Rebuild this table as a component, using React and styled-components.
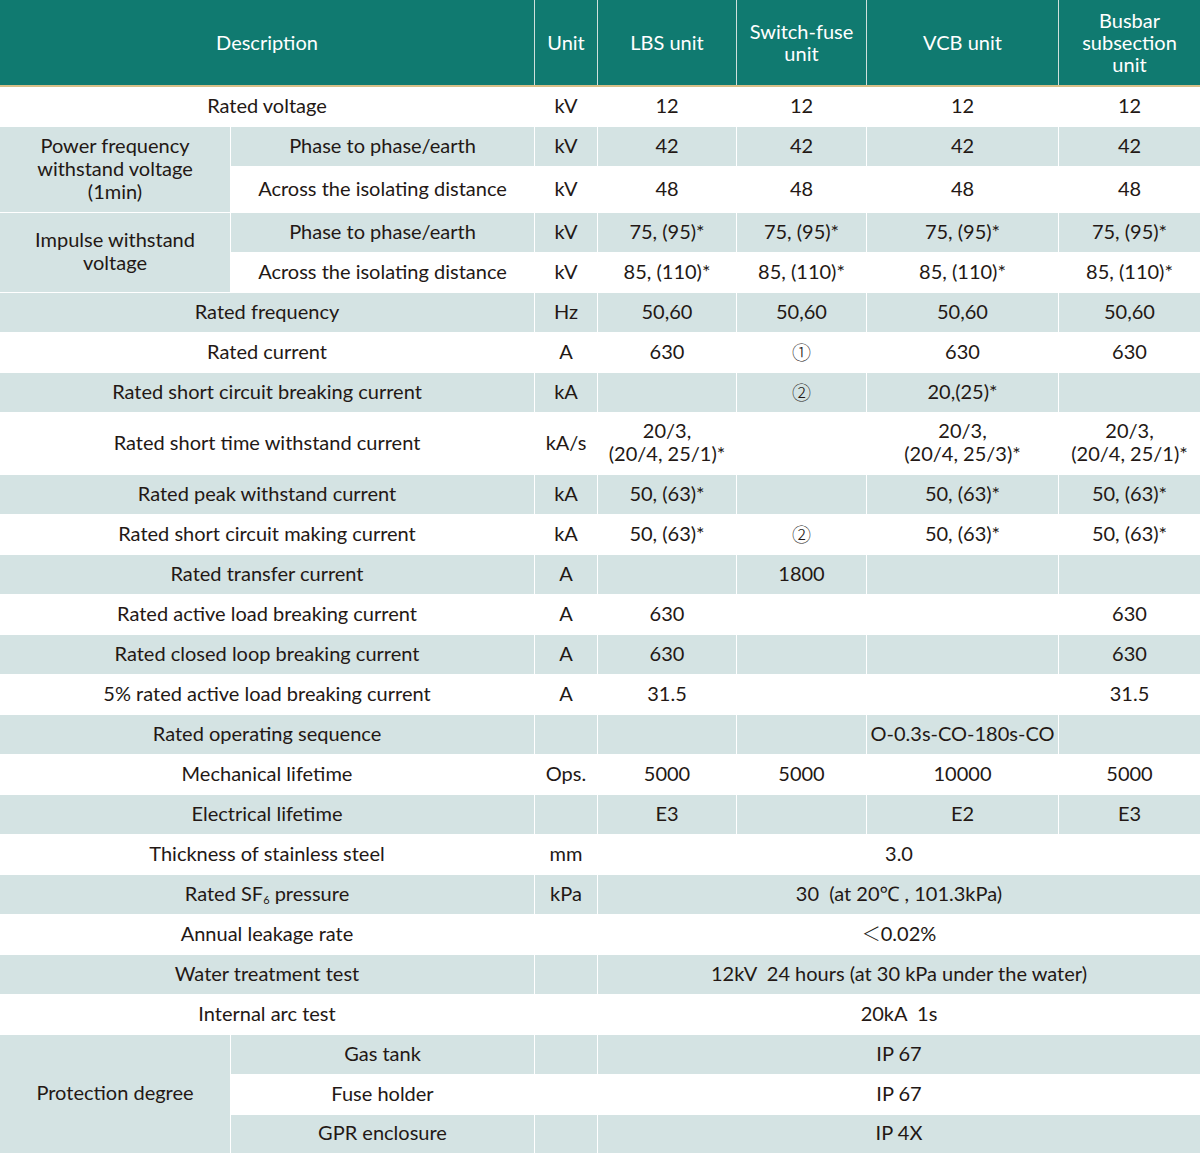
import React from "react";
import styled, { createGlobalStyle } from "styled-components";

const GlobalStyle = createGlobalStyle`
  body {
    margin: 0;
    background: #fff;
    font-family: Lato, "Noto Sans", "Noto Sans CJK JP", sans-serif;
  }
`;

const COLS = "230px 303px 62px 138px 129px 191px 141px";
const SHADE = "#d4e3e3";

const Table = styled.div`
  width: 1200px;
  color: #231815;
`;

const Head = styled.div`
  display: grid;
  grid-template-columns: ${COLS};
  grid-template-rows: 85px;
  column-gap: 1px;
  background: #cfe0dc;
  border-bottom: 2px solid #d8bf88;
`;

const HeadCell = styled.div`
  grid-column: span ${({ $span }) => $span || 1};
  background: #107a70;
  color: #fff;
  display: flex;
  align-items: center;
  justify-content: center;
  text-align: center;
  font-size: 20px;
  line-height: 22px;
  padding-bottom: 2px;
  white-space: pre-line;
`;

const Body = styled.div`
  display: grid;
  grid-template-columns: ${COLS};
  grid-template-rows: ${({ $rows }) => $rows};
  gap: 1px;
  background: #fff;
`;

const Cell = styled.div`
  grid-column: span ${({ $span }) => $span || 1};
  grid-row: span ${({ $rows }) => $rows || 1};
  background: ${({ $shade }) => ($shade ? SHADE : "#fff")};
  display: flex;
  align-items: center;
  justify-content: center;
  text-align: center;
  font-size: 20px;
  line-height: 23px;
  padding-bottom: 3px;
  white-space: pre-wrap;
`;

const Sub = styled.sub`
  font-size: 11px;
  vertical-align: -3px;
  line-height: 0;
`;

const Glyph = styled.span`
  font-family: "Noto Sans CJK JP", sans-serif;
  font-weight: 300;
  font-size: 19px;
`;

const same = (v) => [v, v, v, v];
const one = <Glyph>①</Glyph>;
const two = <Glyph>②</Glyph>;

const rows = [
  { h: 39, cells: [{ t: "Rated voltage", span: 2 }, "kV", ...same("12")] },
  {
    h: 39,
    shade: true,
    cells: [
      { t: "Power frequency\nwithstand voltage\n(1min)", rows: 2 },
      "Phase to phase/earth",
      "kV",
      ...same("42"),
    ],
  },
  { h: 45, cells: ["Across the isolating distance", "kV", ...same("48")] },
  {
    h: 39,
    shade: true,
    cells: [
      { t: "Impulse withstand\nvoltage", rows: 2 },
      "Phase to phase/earth",
      "kV",
      ...same("75, (95)*"),
    ],
  },
  { h: 39, cells: ["Across the isolating distance", "kV", ...same("85, (110)*")] },
  { h: 39, shade: true, cells: [{ t: "Rated frequency", span: 2 }, "Hz", ...same("50,60")] },
  { h: 39, cells: [{ t: "Rated current", span: 2 }, "A", "630", { t: one }, "630", "630"] },
  {
    h: 39,
    shade: true,
    cells: [{ t: "Rated short circuit breaking current", span: 2 }, "kA", "", { t: two }, "20,(25)*", ""],
  },
  {
    h: 61,
    cells: [
      { t: "Rated short time withstand current", span: 2 },
      "kA/s",
      "20/3,\n(20/4, 25/1)*",
      "",
      "20/3,\n(20/4, 25/3)*",
      "20/3,\n(20/4, 25/1)*",
    ],
  },
  {
    h: 39,
    shade: true,
    cells: [{ t: "Rated peak withstand current", span: 2 }, "kA", "50, (63)*", "", "50, (63)*", "50, (63)*"],
  },
  {
    h: 39,
    cells: [{ t: "Rated short circuit making current", span: 2 }, "kA", "50, (63)*", { t: two }, "50, (63)*", "50, (63)*"],
  },
  { h: 39, shade: true, cells: [{ t: "Rated transfer current", span: 2 }, "A", "", "1800", "", ""] },
  { h: 39, cells: [{ t: "Rated active load breaking current", span: 2 }, "A", "630", "", "", "630"] },
  { h: 39, shade: true, cells: [{ t: "Rated closed loop breaking current", span: 2 }, "A", "630", "", "", "630"] },
  { h: 39, cells: [{ t: "5% rated active load breaking current", span: 2 }, "A", "31.5", "", "", "31.5"] },
  { h: 39, shade: true, cells: [{ t: "Rated operating sequence", span: 2 }, "", "", "", "O-0.3s-CO-180s-CO", ""] },
  { h: 39, cells: [{ t: "Mechanical lifetime", span: 2 }, "Ops.", "5000", "5000", "10000", "5000"] },
  { h: 39, shade: true, cells: [{ t: "Electrical lifetime", span: 2 }, "", "E3", "", "E2", "E3"] },
  { h: 39, cells: [{ t: "Thickness of stainless steel", span: 2 }, "mm", { t: "3.0", span: 4 }] },
  {
    h: 39,
    shade: true,
    cells: [
      {
        t: (
          <span>
            Rated SF<Sub>6</Sub>{" "}pressure
          </span>
        ),
        span: 2,
      },
      "kPa",
      { t: "30  (at 20℃ , 101.3kPa)", span: 4 },
    ],
  },
  {
    h: 39,
    cells: [
      { t: "Annual leakage rate", span: 2 },
      "",
      {
        t: (
          <span>
            <Glyph>＜</Glyph>0.02%
          </span>
        ),
        span: 4,
      },
    ],
  },
  {
    h: 39,
    shade: true,
    cells: [{ t: "Water treatment test", span: 2 }, "", { t: "12kV  24 hours (at 30 kPa under the water)", span: 4 }],
  },
  { h: 39, cells: [{ t: "Internal arc test", span: 2 }, "", { t: "20kA  1s", span: 4 }] },
  {
    h: 39,
    shade: true,
    cells: [{ t: "Protection degree", rows: 3 }, "Gas tank", "", { t: "IP 67", span: 4 }],
  },
  { h: 39, cells: ["Fuse holder", "", { t: "IP 67", span: 4 }] },
  { h: 38, shade: true, cells: ["GPR enclosure", "", { t: "IP 4X", span: 4 }] },
];

const App = () => {
  const template = rows.map((r) => `${r.h}px`).join(" ");

  return (
    <Table>
      <GlobalStyle />
      <Head>
        <HeadCell $span={2}>Description</HeadCell>
        <HeadCell>Unit</HeadCell>
        <HeadCell>LBS unit</HeadCell>
        <HeadCell>{"Switch-fuse\nunit"}</HeadCell>
        <HeadCell>VCB unit</HeadCell>
        <HeadCell>{"Busbar\nsubsection\nunit"}</HeadCell>
      </Head>
      <Body $rows={template}>
        {rows.map((row, i) =>
          row.cells.map((c, j) => {
            const cell = typeof c === "object" && c !== null && "t" in c ? c : { t: c };
            // spanning group labels stay shaded across their sub rows
            const shade = cell.rows ? true : row.shade;
            return (
              <Cell key={`${i}-${j}`} $span={cell.span} $rows={cell.rows} $shade={shade}>
                {cell.t}
              </Cell>
            );
          })
        )}
      </Body>
    </Table>
  );
};

export default App;
